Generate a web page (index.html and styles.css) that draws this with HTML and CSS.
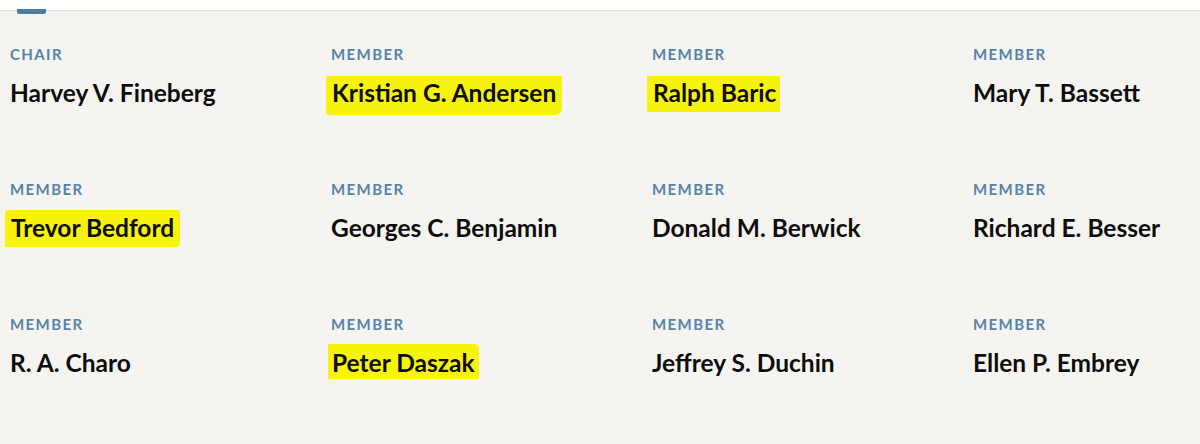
FILE: index.html
```html
<!DOCTYPE html>
<html>
<head>
<meta charset="utf-8">
<link rel="stylesheet" href="styles.css">
</head>
<body>
<div class="topbar"><span class="tab"></span></div>
<main class="roster">
  <div class="person"><div class="role">CHAIR</div><div class="name">Harvey V. Fineberg</div></div>
  <div class="person"><div class="role">MEMBER</div><div class="name"><span class="hl hl-a">Kristian G. Andersen</span></div></div>
  <div class="person"><div class="role">MEMBER</div><div class="name"><span class="hl hl-b">Ralph Baric</span></div></div>
  <div class="person"><div class="role">MEMBER</div><div class="name">Mary T. Bassett</div></div>

  <div class="person"><div class="role">MEMBER</div><div class="name"><span class="hl hl-c">Trevor Bedford</span></div></div>
  <div class="person"><div class="role">MEMBER</div><div class="name">Georges C. Benjamin</div></div>
  <div class="person"><div class="role">MEMBER</div><div class="name">Donald M. Berwick</div></div>
  <div class="person"><div class="role">MEMBER</div><div class="name">Richard E. Besser</div></div>

  <div class="person"><div class="role">MEMBER</div><div class="name">R. A. Charo</div></div>
  <div class="person"><div class="role">MEMBER</div><div class="name"><span class="hl hl-d">Peter Daszak</span></div></div>
  <div class="person"><div class="role">MEMBER</div><div class="name">Jeffrey S. Duchin</div></div>
  <div class="person"><div class="role">MEMBER</div><div class="name">Ellen P. Embrey</div></div>
</main>
</body>
</html>
```
FILE: styles.css
```css
html, body {
  margin: 0;
  padding: 0;
  width: 1200px;
  height: 444px;
  overflow: hidden;
  background: #f5f4f1;
  font-family: Lato, "Open Sans", sans-serif;
}
.topbar {
  height: 10px;
  background: #ffffff;
  border-bottom: 1px solid #dcdad4;
  position: relative;
}
.tab {
  position: absolute;
  left: 17px;
  top: 9px;
  width: 29px;
  height: 5px;
  background: #4d7c9f;
  border-radius: 0 0 2px 2px;
}
.roster {
  display: grid;
  grid-template-columns: 321px 321px 321px 1fr;
  grid-auto-rows: 135px;
  padding: 34px 0 0 10px;
  overflow: hidden;
}
.person {
  display: flex;
  flex-direction: column;
  min-width: 0;
}
.role {
  font-size: 15px;
  font-weight: 700;
  letter-spacing: 1.4px;
  color: #5684a9;
  line-height: 18px;
}
.name {
  margin-top: 15px;
  font-size: 24.5px;
  font-weight: 700;
  color: #0d0d0d;
  line-height: 30px;
  white-space: nowrap;
}
.hl {
  background: #f7f30a;
  padding: 2px 4px 4px 4px;
  margin-left: -5px;
}
.hl-a {
  padding: 2px 6px 8px 6px;
  border-radius: 2px 0 8px 3px / 2px 0 6px 3px;
}
.hl-b {
  padding: 2px 4px 5px 6px;
}
.hl-c {
  padding: 3px 6px 5px 6px;
  border-radius: 3px 2px 4px 0;
}
.hl-d {
  padding: 4px 4px 2px 4px;
  margin-left: -3px;
  border-radius: 0 5px 0 0;
}
```
